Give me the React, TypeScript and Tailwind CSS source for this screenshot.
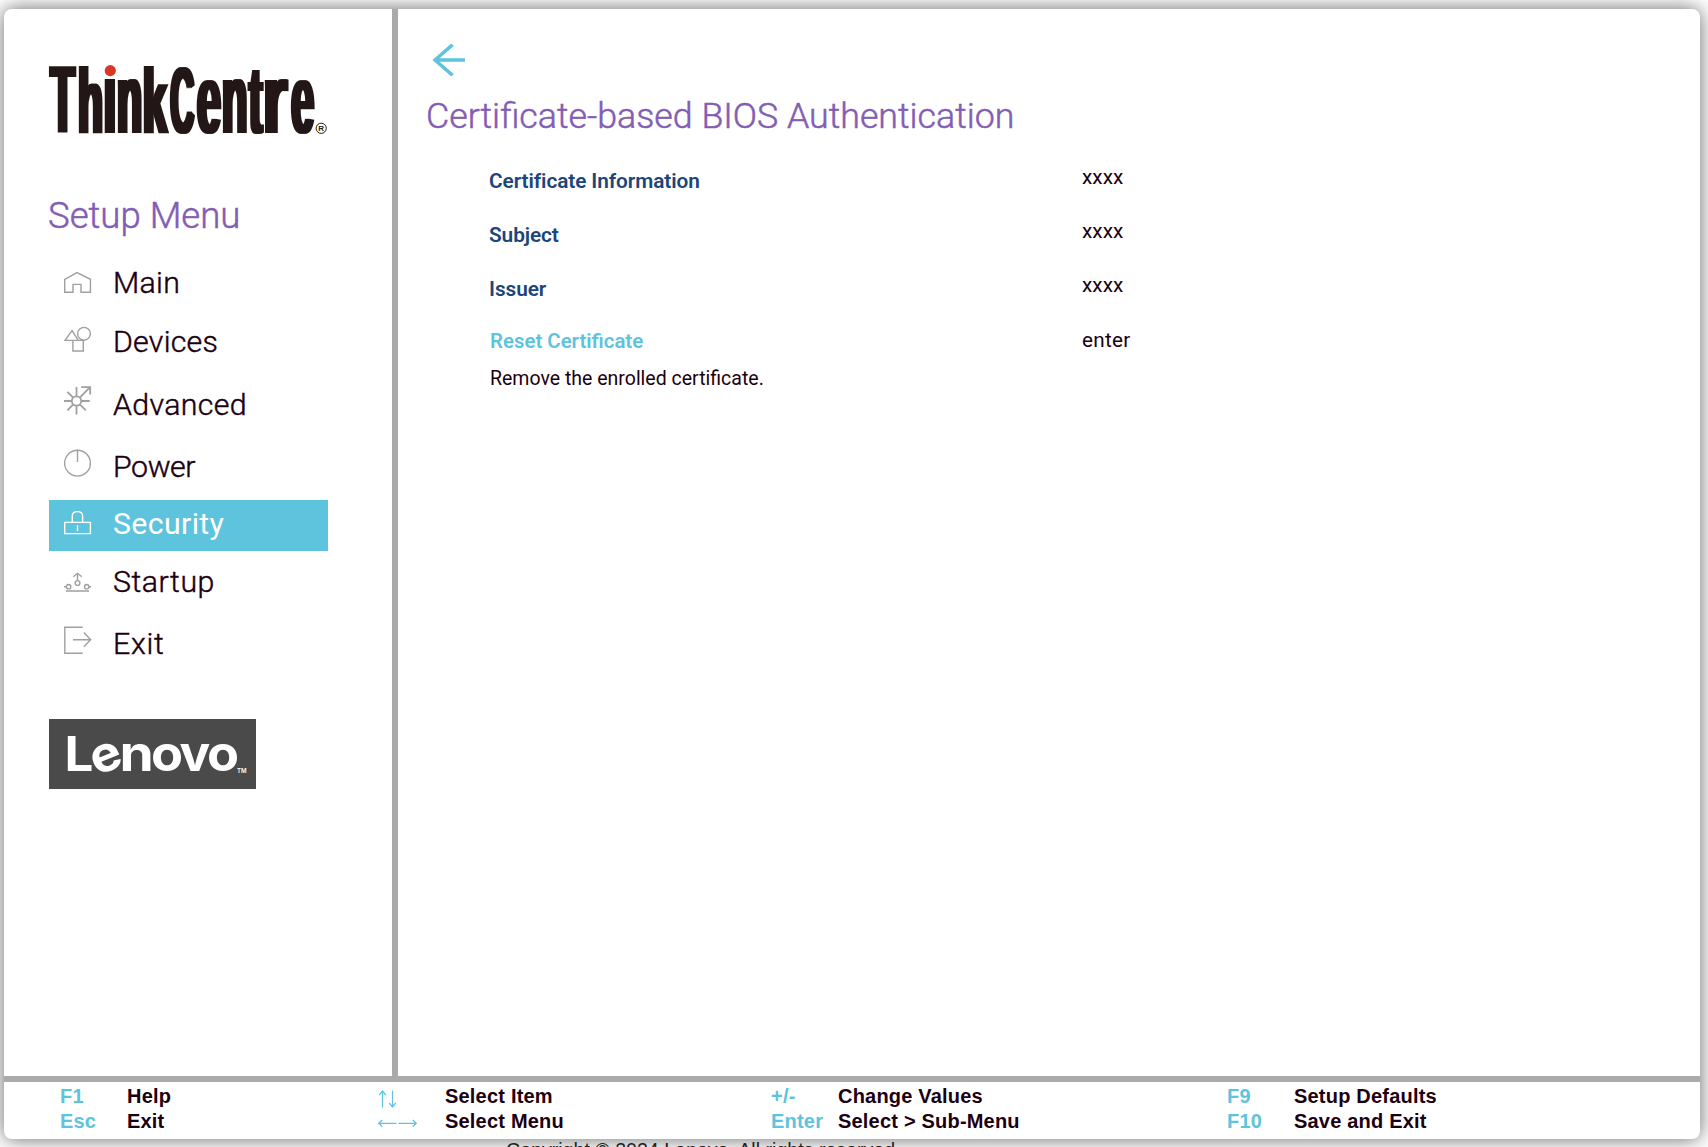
import React from "react";

type Glyph = { ch: string; left: number; right: number; size: number; inkLeft: number; inkRight: number; clip?: string; turn?: number };

const thinkCentre: Glyph[] = [
  { ch: "T", left: 2.4, right: 25, size: 97, inkLeft: 0.021, inkRight: 0.59 },
  { ch: "h", left: 31.8, right: 51.4, size: 92.5, inkLeft: 0.067, inkRight: 0.546 },
  { ch: "i", left: 57.8, right: 64.2, size: 102, inkLeft: 0.07, inkRight: 0.209, clip: "url(#stem)" },
  { ch: "n", left: 70.7, right: 90.4, size: 100, inkLeft: 0.067, inkRight: 0.546 },
  { ch: "k", left: 96.7, right: 118, size: 92.5, inkLeft: 0.067, inkRight: 0.553 },
  { ch: "C", left: 123, right: 143.6, size: 95, inkLeft: 0.046, inkRight: 0.68 },
  { ch: "e", left: 149.5, right: 170, size: 98, inkLeft: 0.037, inkRight: 0.515 },
  { ch: "n", left: 175.7, right: 195.6, size: 100, inkLeft: 0.067, inkRight: 0.546 },
  { ch: "t", left: 200.8, right: 212.8, size: 96, inkLeft: 0.02, inkRight: 0.317 },
  { ch: "r", left: 217.8, right: 238, size: 100, inkLeft: 0.067, inkRight: 0.381 },
  { ch: "e", left: 243.8, right: 263.4, size: 98, inkLeft: 0.037, inkRight: 0.515 },
];

const lenovo: Glyph[] = [
  { ch: "L", left: 19, right: 43.5, size: 48, inkLeft: 0.07, inkRight: 0.55 },
  { ch: "e", left: 43.6, right: 71, size: 49, inkLeft: 0.04, inkRight: 0.57, turn: -22 },
  { ch: "n", left: 74, right: 101, size: 49, inkLeft: 0.065, inkRight: 0.555 },
  { ch: "o", left: 104, right: 132, size: 49, inkLeft: 0.04, inkRight: 0.575 },
  { ch: "v", left: 131, right: 160.5, size: 49, inkLeft: 0.01, inkRight: 0.585 },
  { ch: "o", left: 160, right: 188, size: 49, inkLeft: 0.04, inkRight: 0.575 },
];

function Glyphs({ glyphs, baseline }: { glyphs: Glyph[]; baseline: number }) {
  return (
    <>
      {glyphs.map((g, i) => {
        const sx = (g.right - g.left) / ((g.inkRight - g.inkLeft) * g.size);
        const x = g.left - g.inkLeft * g.size * sx;
        const turn = g.turn ? `rotate(${g.turn} ${(g.left + g.right) / 2} ${baseline - g.size * 0.27}) ` : "";
        return (
          <g key={i} clipPath={g.clip}>
            <text transform={`${turn}translate(${x} ${baseline}) scale(${sx} 1)`} fontSize={g.size}>
              {g.ch}
            </text>
          </g>
        );
      })}
    </>
  );
}

function ThinkCentreLogo() {
  return (
    <svg className="block h-[80px] w-[284px] overflow-visible font-['Liberation_Sans',sans-serif] font-bold" viewBox="0 0 284 80" role="img" aria-label="ThinkCentre">
      <defs>
        <clipPath id="stem"><rect x="50" y="19" width="20" height="60" /></clipPath>
        <filter id="widen" x="-5%" y="-10%" width="110%" height="120%">
          <feMorphology operator="dilate" radius="2 0" />
        </filter>
      </defs>
      <g filter="url(#widen)" fill="#231815"><Glyphs glyphs={thinkCentre} baseline={73} /></g>
      <circle cx="61.3" cy="10.6" r="5.6" fill="#dc3626" />
      <circle cx="272.2" cy="68.3" r="5.1" fill="none" stroke="#231815" strokeWidth="1" />
      <text x="269.3" y="71.3" fontSize="8" fill="#231815">R</text>
    </svg>
  );
}

function LenovoLogo() {
  return (
    <svg className="block h-[70px] w-[207px] overflow-visible bg-[#4a4a4a] font-['Inter',sans-serif] font-bold" viewBox="0 0 207 70" role="img" aria-label="Lenovo">
      <g fill="#fff">
        <Glyphs glyphs={lenovo} baseline={52} />
        <text x="188" y="54" fontSize="6" fontWeight="600">TM</text>
      </g>
    </svg>
  );
}

const menu = [
  { label: "Main", gap: "mt-0", track: "tracking-[0.3px]", icon: <path d="M9 35.3H.7V22.3L13 15.6 26.4 22.3V35.3H17V27.4H9Z" /> },
  {
    label: "Devices", gap: "mt-2", track: "tracking-[0.25px]",
    icon: <><path d="M8 14.6 1 24.4H14.3ZM8.9 24.4H19.3V35H8.9Z" /><circle cx="20" cy="17.8" r="6.4" /></>,
  },
  {
    label: "Advanced", gap: "mt-3", track: "tracking-[0.35px]",
    icon: <g strokeWidth="1.8"><circle cx="12.5" cy="22" r="4.7" /><path d="M0 22H7.8M17.2 22H25.7M12.5 8V17.3M12.5 26.7V35.5M3.4 12.8 9.2 18.7M3.4 31.3 9.2 25.3M15.8 25.3 21.8 31.3M15.8 18.7 26 8.2M17.2 8.2H26.2V15.4" /></g>,
  },
  { label: "Power", gap: "mt-[11px]", track: "tracking-[-0.4px]", icon: <><circle cx="13.5" cy="22.2" r="12.9" /><path d="M13.5 9V21" /></> },
  {
    label: "Security", gap: "mt-2", track: "tracking-[0.35px]",
    icon: <path d="M.7 22.4H26.4V33.6H.7ZM8.3 22.4V16C8.3 13 10 11.6 13.4 11.6S18.6 13 18.6 16V22.4M13.5 25.3V31" />,
  },
  {
    label: "Startup", gap: "mt-[5px]", track: "tracking-[0.55px]",
    icon: <><circle cx="13.5" cy="27" r="2.4" /><circle cx="4.6" cy="30.7" r="2.2" /><circle cx="22.7" cy="30.7" r="2.2" /><path d="M13.5 24.6V17.3M9.3 20.7 13.5 17.3 17.8 20.7M0 30.7H2.4M24.9 30.7H27M2 35H25" /></>,
  },
  { label: "Exit", gap: "mt-[11px]", track: "tracking-[0.7px]", icon: <path d="M18.7 9.2H.8V35.2H18.7M9 21.8H26.5M19.8 14.6 26.7 21.8 19.8 28.8" /> },
];

const info = ["Certificate Information", "Subject", "Issuer"];

const verticalArrows = (
  <svg className="mt-[6px] h-[18px] w-[20px]" viewBox="0 0 20 18" fill="none" stroke="#5ec3dd" strokeWidth="1.2">
    <path d="M4.5 17.5V1M1.2 5 4.5 1 7.8 5M14.5 .5V17M11.2 13 14.5 17 17.8 13" />
  </svg>
);
const horizontalArrows = (
  <svg className="mt-[8px] h-[12px] w-[41px]" viewBox="0 0 41 12" fill="none" stroke="#5ec3dd" strokeWidth="1.3">
    <path d="M18.5 6.3H1M4.2 3 .8 6.3 4.2 9.6M20.5 6.3H38M34.8 3 38.2 6.3 34.8 9.6" />
  </svg>
);

const hints: [React.ReactNode, string][][] = [
  [["F1", "Help"], ["Esc", "Exit"]],
  [[verticalArrows, "Select Item"], [horizontalArrows, "Select Menu"]],
  [["+/-", "Change Values"], ["Enter", "Select > Sub-Menu"]],
  [["F9", "Setup Defaults"], ["F10", "Save and Exit"]],
];

export default function App() {
  return (
    <div className="h-[1147px] w-[1708px] overflow-hidden bg-white pt-[9px] pl-1 font-['Roboto',sans-serif] text-[#1c0010]">
      <div className="flex h-[1130px] w-[1696px] flex-col overflow-hidden rounded-lg bg-white shadow-[0_0_20px_rgba(0,0,0,0.6)]">
        <div className="flex h-[1067px] shrink-0">
          <aside className="w-[394px] shrink-0 border-r-[6px] border-[#aaaaaa] pt-[51px] pl-[45px]">
            <ThinkCentreLogo />
            <h1 className="mt-[56px] -ml-px text-[36.6px] leading-10 font-light text-[#835db4] [-webkit-text-stroke:0.5px]">Setup Menu</h1>
            <nav className="mt-[21px] w-[279px]">
              {menu.map((m) => {
                const on = m.label === "Security";
                return (
                  <a key={m.label} className={`${m.gap} flex h-[51px] items-start pl-[15px] ${on ? "bg-[#5ec3dc] text-white" : ""}`}>
                    <svg className={`h-[51px] w-7 shrink-0 ${on ? "text-white" : "text-[#a0a0a0]"}`} viewBox="0 0 28 51" fill="none" stroke="currentColor" strokeWidth="1.4">
                      {m.icon}
                    </svg>
                    <span className={`ml-[21px] text-[30.3px] ${m.track} ${on ? "leading-[47px] font-normal" : "leading-[51px] font-light [-webkit-text-stroke:0.45px]"}`}>{m.label}</span>
                  </a>
                );
              })}
            </nav>
            <div className="mt-[50px]"><LenovoLogo /></div>
          </aside>
          <main className="flex-1 pt-[35px]">
            <svg className="ml-[33px] h-[32px] w-[34px]" viewBox="0 0 34 32" fill="none" stroke="#5ec3dd" strokeWidth="3.4">
              <path d="M34 16H3.5M21.6 .6 4 16 21.6 31.4" />
            </svg>
            <h2 className="mt-[20px] ml-[28px] text-[35.75px] leading-10 font-light text-[#835db4] [-webkit-text-stroke:0.5px]">Certificate-based BIOS Authentication</h2>
            <div className="mt-[18px] ml-[91px]">
              {info.map((label) => (
                <div key={label} className="flex h-[54px] items-start leading-[54px]">
                  <span className="w-[593px] text-[20.8px] font-[570] tracking-[-0.08px] text-[#1c4679]">{label}</span>
                  <span className="-mt-1 text-[20.8px]">xxxx</span>
                </div>
              ))}
              <div className="flex h-[50px] items-start leading-[50px]">
                <span className="w-[593px] pl-[1px] text-[20.4px] font-[590] text-[#5ec3dd]">Reset Certificate</span>
                <span className="-mt-px text-[20.7px] tracking-[0.3px]">enter</span>
              </div>
              <p className="pt-px pl-[1px] text-[19.5px] leading-6">Remove the enrolled certificate.</p>
            </div>
          </main>
        </div>
        <footer className="grid flex-1 grid-cols-[318px_393px_456px_1fr] border-t-[6px] border-[#aaaaaa] pt-[2px] pl-[56px] font-['Liberation_Sans',sans-serif] text-[20px] leading-[25px] font-bold tracking-[0.2px]">
          {hints.map((column, i) => (
            <div key={i} className="grid grid-cols-[67px_auto] content-start">
              {column.map(([key, text]) => (
                <React.Fragment key={text}>
                  <span className="h-[25px] text-[#5ec3dd]">{key}</span>
                  <span className="h-[25px] whitespace-nowrap">{text}</span>
                </React.Fragment>
              ))}
            </div>
          ))}
        </footer>
      </div>
      <p className="relative pl-[502px] font-['Liberation_Sans',sans-serif] text-[19.6px] leading-[23px] text-[#222222]">Copyright © 2024 Lenovo. All rights reserved.</p>
    </div>
  );
}
